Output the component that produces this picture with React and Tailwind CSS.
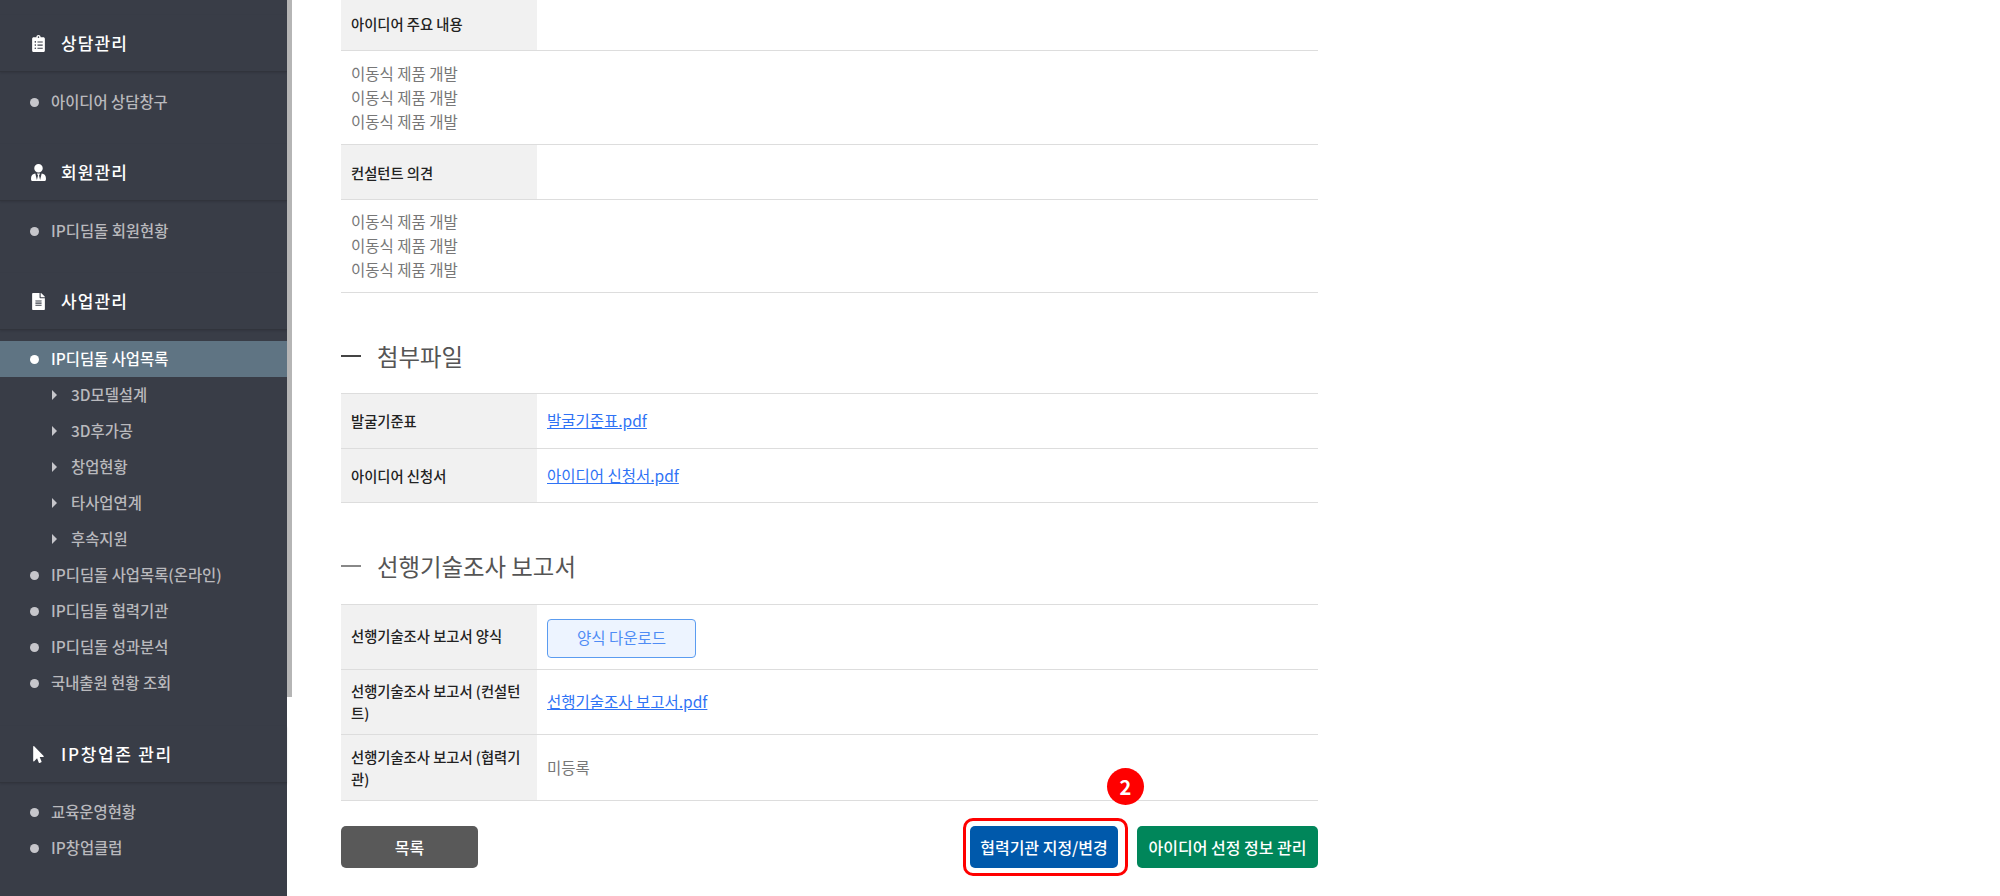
import React from "react";
import { FaClipboardList, FaUserTie, FaFileAlt, FaMousePointer } from "react-icons/fa";

const font = { fontFamily: '"Noto Sans CJK KR", "Noto Sans", sans-serif' };

function MenuHead({ icon, children, className = "tracking-[1.1px]" }) {
  return (
    <div className={`flex h-[57px] items-center border-b border-[#31343c] pl-[30px] text-[17px] font-medium text-white shadow-[0_1px_2px_rgba(0,0,0,0.12)] ${className}`}>
      <span className="flex w-[31px] text-[17px]">{icon}</span>
      {children}
    </div>
  );
}

function MenuItem({ children, active }) {
  return (
    <li className={`flex h-[36px] items-center pl-[30px] text-[15.4px] font-medium ${active ? "bg-[#5f7483] text-white" : "text-[#b9b9bd]"}`}>
      <span className={`mr-[12px] h-[9px] w-[9px] rounded-full ${active ? "bg-white" : "bg-[#c6c6cb]"}`} />
      {children}
    </li>
  );
}

function SubItem({ children }) {
  return (
    <li className="flex h-[36px] items-center pl-[52px] text-[15.4px] font-medium text-[#b9b9bd]">
      <span className="mr-[14px] h-0 w-0 border-y-[5px] border-l-[5px] border-y-transparent border-l-[#c6c6cb]" />
      {children}
    </li>
  );
}

function Sidebar() {
  return (
    <aside className="h-full w-[287px] shrink-0 bg-[#393d47] pt-[15px]">
      <MenuHead icon={<FaClipboardList />}>상담관리</MenuHead>
      <ul className="pt-[12px] pb-[24px]">
        <MenuItem>아이디어 상담창구</MenuItem>
      </ul>
      <MenuHead icon={<FaUserTie />}>회원관리</MenuHead>
      <ul className="pt-[12px] pb-[24px]">
        <MenuItem>IP디딤돌 회원현황</MenuItem>
      </ul>
      <MenuHead icon={<FaFileAlt />}>사업관리</MenuHead>
      <ul className="pt-[11px] pb-[25px]">
        <MenuItem active>IP디딤돌 사업목록</MenuItem>
        <SubItem>3D모델설계</SubItem>
        <SubItem>3D후가공</SubItem>
        <SubItem>창업현황</SubItem>
        <SubItem>타사업연계</SubItem>
        <SubItem>후속지원</SubItem>
        <MenuItem>IP디딤돌 사업목록(온라인)</MenuItem>
        <MenuItem>IP디딤돌 협력기관</MenuItem>
        <MenuItem>IP디딤돌 성과분석</MenuItem>
        <MenuItem>국내출원 현황 조회</MenuItem>
      </ul>
      <MenuHead icon={<FaMousePointer />} className="tracking-[1.7px]">IP창업존 관리</MenuHead>
      <ul className="pt-[11px]">
        <MenuItem>교육운영현황</MenuItem>
        <MenuItem>IP창업클럽</MenuItem>
      </ul>
    </aside>
  );
}

function Row({ label, height, labelClass = "", children }) {
  return (
    <div className={`flex border-b border-[#ddd] ${height}`}>
      <div className={`flex w-[196px] shrink-0 items-center bg-[#f1f1f1] px-[10px] text-[14.3px] leading-[22px] font-medium text-[#222] ${labelClass}`}>
        {label}
      </div>
      <div className="flex flex-1 items-center px-[10px] text-[15.5px] text-[#777]">{children}</div>
    </div>
  );
}

function TextBlock({ height, pad }) {
  return (
    <div className={`border-b border-[#ddd] px-[10px] text-[15.5px] leading-[24px] text-[#777] ${height} ${pad}`}>
      <p>이동식 제품 개발</p>
      <p>이동식 제품 개발</p>
      <p>이동식 제품 개발</p>
    </div>
  );
}

function SectionTitle({ children, dash, className }) {
  return (
    <h3 className={`flex items-center text-[23.4px] leading-[34px] font-normal text-[#555] ${className}`}>
      <span className={`mr-[16px] h-[2px] w-[20px] ${dash}`} />
      {children}
    </h3>
  );
}

function FileLink({ children }) {
  return <a className="text-[#2f73f5] underline">{children}</a>;
}

export default function App() {
  return (
    <div className="flex h-[896px] w-[2000px] overflow-hidden bg-white" style={font}>
      <Sidebar />
      <div className="w-[5px] shrink-0">
        <div className="h-[697px] bg-[#b5b5b5]" />
      </div>
      <main className="w-[1026px] pl-[49px]">
        <Row label="아이디어 주요 내용" height="h-[51px]" labelClass="pb-[2px]" />
        <TextBlock height="h-[94px]" pad="pt-[10px]" />
        <Row label="컨설턴트 의견" height="h-[55px]" labelClass="pt-[2px]" />
        <TextBlock height="h-[93px]" pad="pt-[9px]" />

        <SectionTitle dash="bg-[#444]" className="mt-[46px]">첨부파일</SectionTitle>

        <div className="mt-[20px] border-t border-[#ddd]">
          <Row label="발굴기준표" height="h-[55px]">
            <FileLink>발굴기준표.pdf</FileLink>
          </Row>
          <Row label="아이디어 신청서" height="h-[54px]">
            <FileLink>아이디어 신청서.pdf</FileLink>
          </Row>
        </div>

        <SectionTitle dash="bg-[#888]" className="mt-[46px]">선행기술조사 보고서</SectionTitle>

        <div className="mt-[21px] border-t border-[#ddd]">
          <Row label="선행기술조사 보고서 양식" height="h-[65px]" labelClass="pb-[2px]">
            <button className="mt-[2px] h-[39px] w-[149px] rounded-[4px] border border-[#5b9cf0] bg-[#edf4ff] text-[15.5px] text-[#4f8cf5]">
              양식 다운로드
            </button>
          </Row>
          <Row label="선행기술조사 보고서 (컨설턴트)" height="h-[65px]">
            <FileLink>선행기술조사 보고서.pdf</FileLink>
          </Row>
          <Row label="선행기술조사 보고서 (협력기관)" height="h-[66px]">
            미등록
          </Row>
        </div>

        <div className="mt-[25px] flex items-center justify-between">
          <button className="h-[42px] w-[137px] rounded-[5px] bg-[#595959] text-[16px] font-medium text-white">
            목록
          </button>
          <div className="flex gap-[19px]">
            <div className="relative">
              <button className="h-[42px] w-[148px] rounded-[5px] bg-[#0059ab] text-[16px] font-medium text-white">
                협력기관 지정/변경
              </button>
              <span className="absolute -top-[8px] -right-[10px] -bottom-[8px] -left-[7px] rounded-[10px] border-[3px] border-[#f00]" />
              <span className="absolute -top-[58px] -right-[26px] flex h-[37px] w-[37px] items-center justify-center rounded-full bg-[#f00] text-[20px] font-bold text-white">
                2
              </span>
            </div>
            <button className="h-[42px] w-[181px] rounded-[5px] bg-[#00865a] text-[16px] font-medium text-white">
              아이디어 선정 정보 관리
            </button>
          </div>
        </div>
      </main>
    </div>
  );
}
